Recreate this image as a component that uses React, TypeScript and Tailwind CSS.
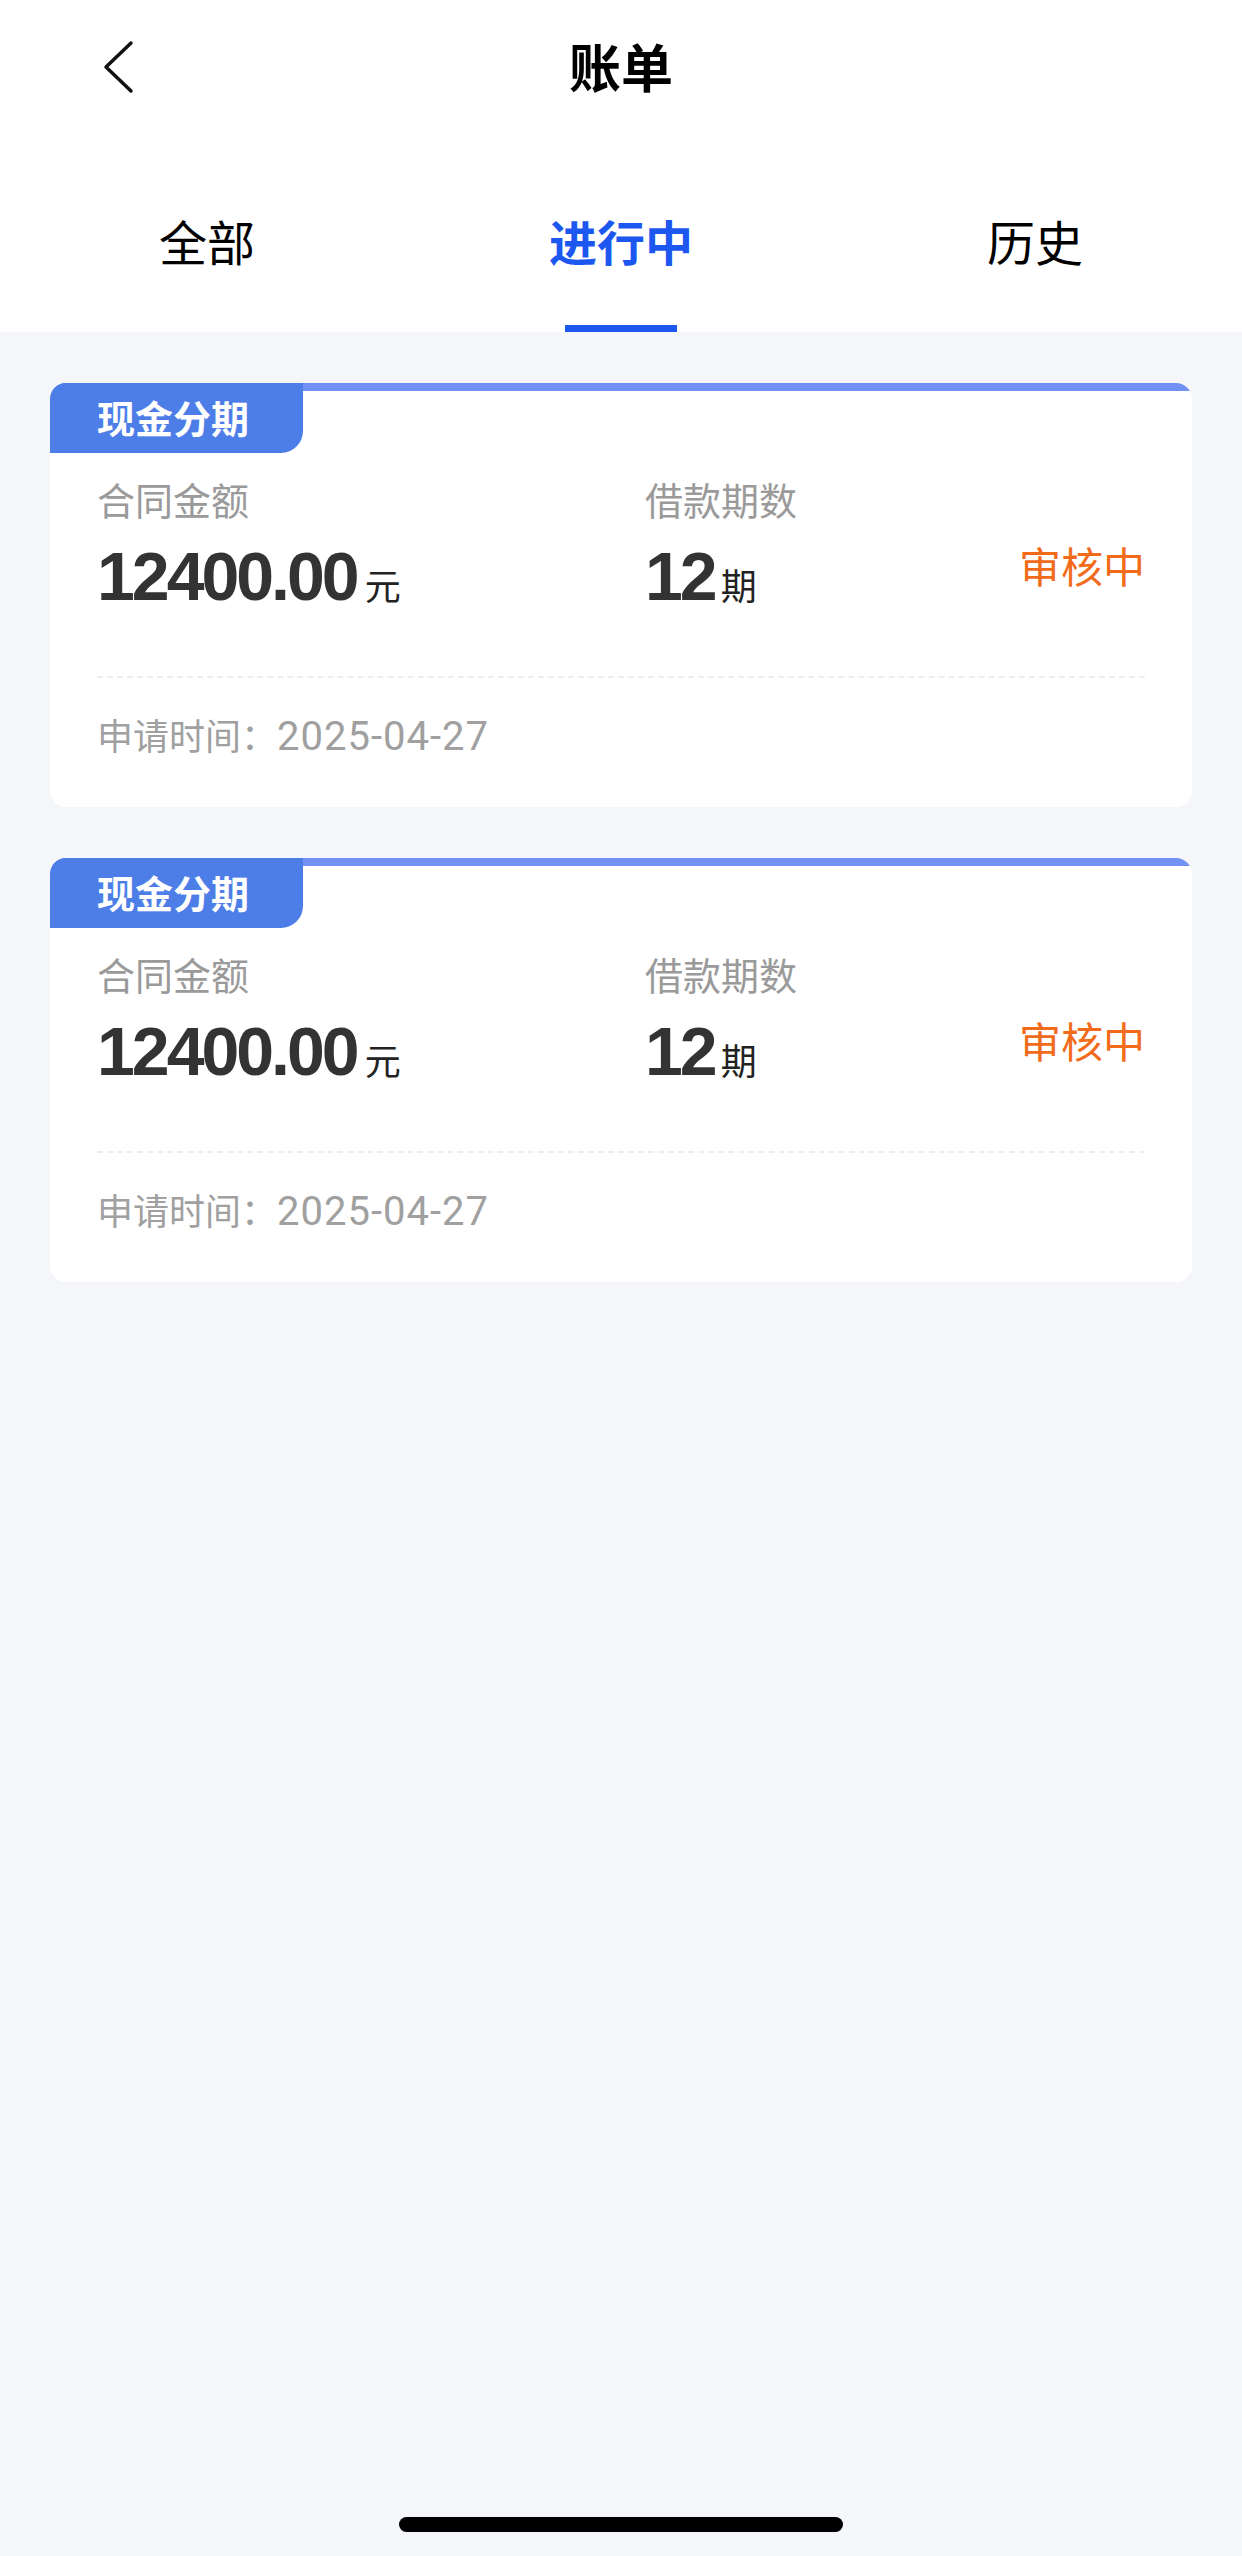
import React from 'react';

const cjk = "font-['Noto_Sans_CJK_SC',sans-serif]";
const num = "font-['Liberation_Sans','Noto_Sans_CJK_SC',sans-serif]";

type Bill = {
  type: string;
  amount: string;
  periods: number;
  status: string;
  date: string;
};

const bills: Bill[] = [
  { type: '现金分期', amount: '12400.00', periods: 12, status: '审核中', date: '2025-04-27' },
  { type: '现金分期', amount: '12400.00', periods: 12, status: '审核中', date: '2025-04-27' },
];

function BillCard({ bill }: { bill: Bill }) {
  return (
    <div className="relative bg-white rounded-[16px] overflow-hidden">
      {/* top stripe */}
      <div className="h-[8px] bg-[#7191f5]" />
      {/* type badge */}
      <div className="absolute top-0 left-0 w-[253px] h-[70px] bg-[#4d7ee8] rounded-br-[22px] flex items-center pl-[47px] pb-[2px]">
        <span className={`${cjk} text-[38px] leading-none font-bold text-white`}>{bill.type}</span>
      </div>

      <div className="px-[47px] pt-[88px] pb-[50px]">
        <div className="flex items-center">
          <div className="w-[548px]">
            <div className={`${cjk} text-[38px] leading-[40px] text-[#9a9a9a]`}>合同金额</div>
            <div className="flex items-baseline mt-[22px]">
              <span className={`${num} text-[68px] leading-[71px] font-bold text-[#333] tracking-[-3px]`}>{bill.amount}</span>
              <span className={`${cjk} text-[36px] leading-none text-[#222] ml-[8px]`}>元</span>
            </div>
          </div>
          <div className="flex-1">
            <div className={`${cjk} text-[38px] leading-[40px] text-[#9a9a9a]`}>借款期数</div>
            <div className="flex items-baseline mt-[22px]">
              <span className={`${num} text-[68px] leading-[71px] font-bold text-[#333] tracking-[-3px]`}>{bill.periods}</span>
              <span className={`${cjk} text-[36px] leading-none text-[#222] ml-[6px]`}>期</span>
            </div>
          </div>
          <div className={`${cjk} text-[42px] leading-none text-[#f26b1a] pt-[38px]`}>{bill.status}</div>
        </div>

        <div className="mt-[64px] border-t-2 border-dashed border-[#eeeeee]" />

        <div className={`${cjk} mt-[36px] text-[36px] leading-[40px] text-[#a0a0a0]`}>
          申请时间：<span className="font-['Roboto',sans-serif] text-[40px] tracking-[1px]">{bill.date}</span>
        </div>
      </div>
    </div>
  );
}

export default function App() {
  const tabs = ['全部', '进行中', '历史'];
  const active = 1;

  return (
    <div className="min-h-[2556px] w-[1242px] flex flex-col bg-[#f5f6fa]">
      {/* Nav bar */}
      <div className="bg-white">
        <div className="relative h-[132px] flex items-center justify-center">
          <button className="absolute left-[100px] top-[40px]">
            <svg width="36" height="54" viewBox="0 0 36 54" fill="none">
              <polyline points="31,3 6,27 31,51" stroke="#111" strokeWidth="3.5" strokeLinecap="round" strokeLinejoin="round" />
            </svg>
          </button>
          <h1 className={`${cjk} text-[52px] leading-none font-bold text-black`}>账单</h1>
        </div>

        {/* Tabs */}
        <div className="grid grid-cols-3 h-[200px]">
          {tabs.map((t, i) => (
            <div key={t} className="flex flex-col items-center justify-between pt-[84px]">
              <span
                className={`${cjk} text-[48px] leading-none ${i === active ? 'font-bold text-[#1c57f0]' : 'text-black'}`}
              >
                {t}
              </span>
              <div className={`h-[7px] w-[112px] ${i === active ? 'bg-[#1c57f0]' : 'bg-transparent'}`} />
            </div>
          ))}
        </div>
      </div>

      {/* List */}
      <div className="flex-1 flex flex-col gap-[51px] px-[50px] pt-[51px]">
        {bills.map((b, i) => (
          <BillCard key={i} bill={b} />
        ))}
      </div>

      {/* Home indicator */}
      <div className="flex justify-center pb-[24px]">
        <div className="w-[444px] h-[15px] rounded-full bg-black" />
      </div>
    </div>
  );
}
